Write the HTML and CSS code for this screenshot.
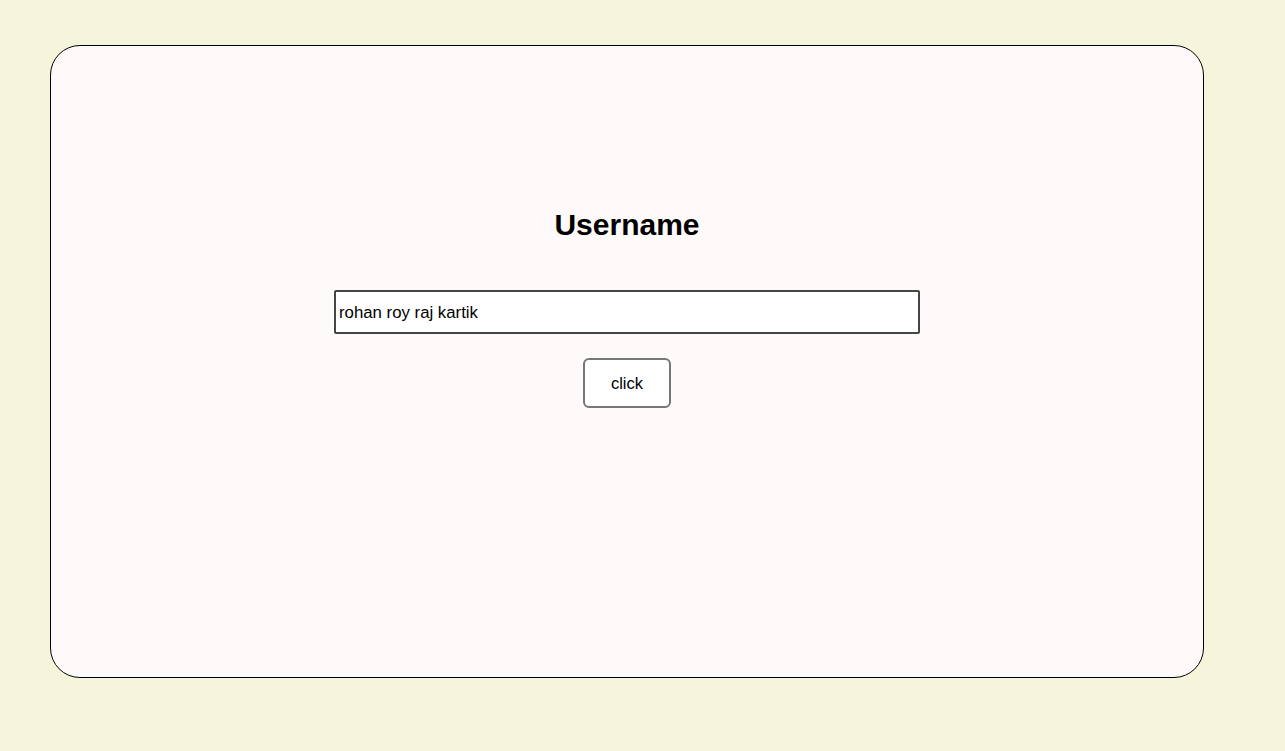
FILE: index.html
```html
<!DOCTYPE html>
<html lang="en">
<head>
<meta charset="utf-8">
<title>Username</title>
<link rel="stylesheet" href="styles.css">
</head>
<body>
<main class="card">
  <h1 class="title">Username</h1>
  <input class="name-input" type="text" value="rohan roy raj kartik">
  <button class="btn" type="button">click</button>
</main>
</body>
</html>
```

FILE: styles.css
```css
html, body {
  margin: 0;
  padding: 0;
}
body {
  background: #f5f5dc;
  font-family: "Liberation Sans", Arial, sans-serif;
  padding: 45px 0 0 50px;
  min-height: 751px;
  box-sizing: border-box;
}
.card {
  box-sizing: border-box;
  width: 1154px;
  height: 633px;
  background: #fffafa;
  border: 1px solid #000;
  border-radius: 30px;
  display: flex;
  flex-direction: column;
  align-items: center;
  padding-top: 162px;
}
.title {
  margin: 0;
  font-size: 30px;
  font-weight: bold;
  line-height: 34px;
  color: #000;
}
.name-input {
  box-sizing: border-box;
  margin-top: 48px;
  width: 586px;
  height: 44px;
  border: 2px solid #464646;
  border-radius: 2px;
  background: #fff;
  padding: 1px 3px 0;
  font-family: "Liberation Sans", Arial, sans-serif;
  font-size: 16.8px;
  color: #000;
  outline: none;
}
.btn {
  box-sizing: border-box;
  margin-top: 24px;
  width: 88px;
  height: 50px;
  background: #fff;
  border: 2px solid #777;
  border-radius: 6px;
  font-family: "Liberation Sans", Arial, sans-serif;
  font-size: 16.5px;
  color: #000;
  cursor: pointer;
}
```
